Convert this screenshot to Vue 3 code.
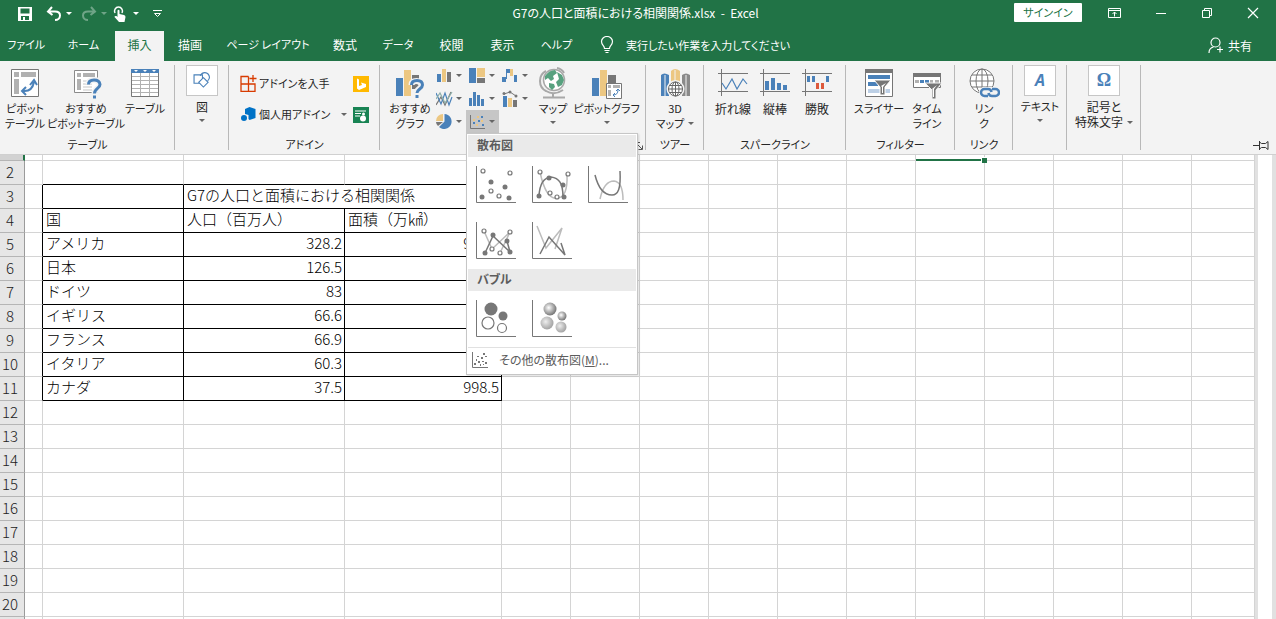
<script setup>
const tabs = ['ファイル', 'ホーム', '挿入', '描画', 'ページ レイアウト', '数式', 'データ', '校閲', '表示', 'ヘルプ']
const kanaOnly = (t) => /^[ァ-ー ]+$/.test(t)
const countries = [
  ['アメリカ', '328.2', '983.4'],
  ['日本', '126.5', ''],
  ['ドイツ', '83', ''],
  ['イギリス', '66.6', ''],
  ['フランス', '66.9', ''],
  ['イタリア', '60.3', ''],
  ['カナダ', '37.5', '998.5']
]
const emptyRows = ['12', '13', '14', '15', '16', '17', '18', '19', '20', '']
</script>

<template>
  <div class="app">
    <header class="titlebar">
      <div class="quick">
        <button class="qbtn" aria-label="上書き保存">
          <svg width="16" height="16" viewBox="0 0 16 16"><path d="M1 1h14v14H1z" fill="#fff" /><path d="M3.500 2.500h9v5h-9zM4 10h8v4H4z" fill="#217346" /><path d="M6 11h2v3H6z" fill="#fff" /></svg>
        </button>
        <button class="qbtn wide" aria-label="元に戻す">
          <svg width="16" height="16" viewBox="0 0 16 16" fill="none" stroke="#fff" stroke-width="2"><path d="M6 1 2 5.500l4.500 3.500M2 5.500h7c3 0 5 1.500 5 4s-2 4.500-5 4.500" /></svg>
          <i class="caret"></i>
        </button>
        <button class="qbtn wide dim" aria-label="やり直し">
          <svg width="16" height="16" viewBox="0 0 16 16" fill="none" stroke="#fff" stroke-width="2"><path d="m10 1 4 4.500L9.500 9M14 5.500H7c-3 0-5 1.500-5 4S4 14 7 14" /></svg>
          <i class="caret"></i>
        </button>
        <button class="qbtn wide touch" aria-label="タッチ/マウス モードの切り替え">
          <svg width="14" height="16" viewBox="0 0 14 16"><path d="M2 7a4 4 0 1 1 7 0" fill="none" stroke="#fff" stroke-width="1.500" /><path d="M4.500 4.500q1-1.500 2 0V8l4.500 1q1.500.5 1.500 2l-1 5H6L1.500 11q0-1.500 2-1l1 1z" fill="#fff" /></svg>
          <i class="caret"></i>
        </button>
        <button class="qbtn last" aria-label="クイック アクセス ツール バーのユーザー設定">
          <svg width="9" height="8" viewBox="0 0 9 8" fill="none" stroke="#fff"><path d="M0 .5h9M1.500 3.500l3 3 3-3z" /></svg>
        </button>
      </div>
      <div class="doc">G7の人口と面積における相関関係.xlsx &nbsp;- &nbsp;Excel</div>
      <div class="window">
        <button class="signin">サインイン</button>
        <button class="wbtn" aria-label="リボンの表示オプション"><svg width="14" height="12" viewBox="0 0 14 12" fill="none" stroke="#fff"><path d="M.5 1.500h12v9H.5zM.5 3.500h12M6.500 9.500V5M4.500 7l2-2 2 2" /></svg></button>
        <button class="wbtn" aria-label="最小化"><svg width="12" height="12" viewBox="0 0 12 12" stroke="#fff"><path d="M1 6.500h10" /></svg></button>
        <button class="wbtn" aria-label="元に戻す(縮小)"><svg width="12" height="12" viewBox="0 0 12 12" fill="none" stroke="#fff"><path d="M1.500 3.500h7v7h-7zM3.500 3.500v-2h7v7h-2" /></svg></button>
        <button class="wbtn" aria-label="閉じる"><svg width="12" height="12" viewBox="0 0 12 12" stroke="#fff" stroke-width="1.200"><path d="m1 1 10 10M11 1 1 11" /></svg></button>
      </div>
    </header>

    <nav class="tabs">
      <button v-for="t in tabs" :key="t" class="tab" :class="{ active: t === '挿入', kana: kanaOnly(t) }">{{ t }}</button>
      <button class="tell kana">
        <svg width="14" height="18" viewBox="0 0 14 18" fill="none" stroke="#fff" stroke-width="1.200"><path d="M4.500 12.500c0-3-3-3.500-3-7a5.500 5 0 0 1 11 0c0 3.500-3 4-3 7zM4.500 14.500h5M5.500 16.500h3" /></svg>
        実行したい作業を入力してください
      </button>
      <button class="share">
        <svg width="16" height="17" viewBox="0 0 16 17" fill="none" stroke="#fff" stroke-width="1.200"><circle cx="7.500" cy="5.500" r="4.500" /><path d="M1 16c0-3.500 2-5.500 4.500-6M12 9.500v6M9 12.500h6" /></svg>
        共有
      </button>
    </nav>

    <section class="ribbon">
      <div class="group">
        <div class="items g-table">
          <button class="big">
            <svg width="32" height="32" viewBox="0 0 32 32"><path d="M2.500 2.500h27v27h-27z" fill="#fff" stroke="#767676" /><path d="M5 5h5v5H5zM12 5h15v5H12zM5 12h5v15H5z" fill="#b1b1b1" /><path d="M14 24q9 1 11-9m-4 3 4-5 3 5M17 20l-4 4 4 4" fill="none" stroke="#4a81b9" stroke-width="2" /></svg>
            <span>ピボット<br>テーブル</span>
          </button>
          <button class="big">
            <svg width="32" height="32" viewBox="0 0 32 32"><path d="M4.500 3.500h23v22h-23z" fill="#fff" stroke="#8a8a8a" /><path d="M7 6h4v4H7zM13 6h12v4H13zM7 12h4v11H7z" fill="#b1b1b1" /><path d="M13 14h9M13 17h9M13 20h9M13 23h9" stroke="#c5c5c5" /><path d="M18.500 17q0-4 5.500-4t6 4.500c0 4-5.500 4-5.500 9m0 2v3" fill="none" stroke="#f3f3f3" stroke-width="6" /><path d="M18.500 17.500q0-4.500 5.500-4.500t6 4.500c0 4-5.500 4-5.500 9m0 2v3" fill="none" stroke="#4a81b9" stroke-width="3" /></svg>
            <span>おすすめ<br>ピボットテーブル</span>
          </button>
          <button class="big">
            <svg width="32" height="32" viewBox="0 0 32 32"><path d="M2.500 2.500h27v27h-27z" fill="#fff" stroke="#777" /><path d="M2 2h28v4H2z" fill="#4a81b9" /><path d="M5 3h4L7 5zM14 3h4l-2 2zM23 3h4l-2 2z" fill="#fff" /><path d="M11.500 6v23M20.500 6v23M3 9.500h26M3 13.500h26M3 17.500h26M3 21.500h26M3 25.500h26" stroke="#b1b1b1" /></svg>
            <span>テーブル</span>
          </button>
        </div>
        <div class="gname">テーブル</div>
      </div>

      <div class="group">
        <button class="boxed kanji">
          <svg width="32" height="31" viewBox="0 0 32 31" fill="#fff" stroke="#4a81b9" stroke-width="1.200"><path d="M7.500 9.500h9v9h-9z" /><path d="M14 10.500q3-5 8-2.500 4 4 0 8" fill="none" /><path d="m17.500 12.500 5 5-5 5-5-5z" /></svg>
          <span>図</span><i class="caret"></i>
        </button>
      </div>

      <div class="group">
        <div class="items addins">
          <button class="row">
            <svg width="17" height="17" viewBox="0 0 17 17" fill="none" stroke="#d83b01" stroke-width="1.300"><path d="M8.500 1.500H1v15h14V9H1M8.500 1.500V16M13 0v7M9.500 3.500h7" /></svg>アドインを入手
          </button>
          <button class="tile" aria-label="Bing Maps"><svg width="16" height="16" viewBox="0 0 16 16"><path d="M0 0h16v16H0z" fill="#ffb900" /><path d="m4 2.500 2 1V10l3-1-1-2.500L13 8v3l-7 3-2-1.500z" fill="#fff" /></svg></button>
          <button class="row">
            <svg width="17" height="17" viewBox="0 0 17 17" fill="#0072c6"><path d="m9.500 1 6 2v9l-6 2-1-1V9L5 8V3z" /><circle cx="4" cy="12" r="3" /></svg>個人用アドイン<i class="caret"></i>
          </button>
          <button class="tile" aria-label="People Graph"><svg width="16" height="16" viewBox="0 0 16 16"><path d="M0 0h16v16H0z" fill="#188353" /><path d="M2 4h11M2 6.500h6M2 9h5" stroke="#fff" /><circle cx="10.500" cy="7" r="1.500" fill="#fff" /><circle cx="10" cy="11.500" r="3" fill="#fff" /></svg></button>
        </div>
        <div class="gname">アドイン</div>
      </div>

      <div class="group">
        <div class="items g-chart">
          <button class="big first">
            <svg width="32" height="32" viewBox="0 0 32 32"><path d="M2 11h7v18H2z" fill="#4a81b9" /><path d="M10 3h7v26h-7z" fill="#ecc782" /><path d="M18 8h7v14h-7z" fill="#767676" /><path d="M17.500 18q0-4 5-4t5 4.500c0 3.500-5 3.500-5 8m0 2v3" fill="none" stroke="#f3f3f3" stroke-width="6" /><path d="M17.500 18q0-4.500 5.500-4.500t5.500 4.500c0 4-5.500 4-5.500 8m0 2v3" fill="none" stroke="#4a81b9" stroke-width="3" /></svg>
            <span>おすすめ<br>グラフ</span>
          </button>
          <div class="minis">
            <button class="mini" aria-label="縦棒グラフ"><svg width="17" height="17" viewBox="0 0 17 17"><path d="M1 7h4v8H1z" fill="#4a81b9" /><path d="M6 2h4v13H6z" fill="#ecc782" /><path d="M11 5h4v10h-4z" fill="#767676" /></svg><i class="caret"></i></button>
            <button class="mini" aria-label="階層構造グラフ"><svg width="17" height="17" viewBox="0 0 17 17"><path d="M0 1h7v15H0z" fill="#4a81b9" /><path d="M8 1h8v9H8z" fill="#ecc782" /><path d="M8 11h8v5H8z" fill="#767676" /></svg><i class="caret"></i></button>
            <button class="mini" aria-label="ウォーターフォール図"><svg width="17" height="17" viewBox="0 0 17 17"><path d="M0 10h4v5H0zM4 2h4v4H5v6H4z" fill="#4a81b9" /><path d="M8 2h3v7H8z" fill="#ecc782" /><path d="M12 8h3v7h-3z" fill="#4a81b9" /></svg><i class="caret"></i></button>
            <button class="mini" aria-label="折れ線グラフ"><svg width="17" height="17" viewBox="0 0 17 17" fill="none" stroke-width="1.200"><path d="m0 15 5-8 4 8 6-13" stroke="#767676" /><path d="m0 3 5 11 4-11 4 12 3-8" stroke="#4a81b9" /><path d="m0 9 4-6 5 10 7-11" stroke="#8dafaa" /></svg><i class="caret"></i></button>
            <button class="mini" aria-label="統計グラフ"><svg width="17" height="17" viewBox="0 0 17 17" fill="#4a81b9"><path d="M0 8h3v8H0zM4 2h3v14H4zM8 5h3v11H8zM12 9h3v7h-3z" /></svg><i class="caret"></i></button>
            <button class="mini" aria-label="複合グラフ"><svg width="17" height="17" viewBox="0 0 17 17"><path d="M1 6h4v11H1z" fill="#4a81b9" /><path d="M6 8h4v9H6z" fill="#ecc782" /><path d="M11 10h4v7h-4z" fill="#767676" /><path d="M2 4 8 2l6 4" stroke="#767676" fill="none" /><circle cx="2" cy="3.500" r="1.500" fill="#767676" /><circle cx="8" cy="2" r="1.500" fill="#767676" /><circle cx="14" cy="6" r="1.500" fill="#767676" /></svg><i class="caret"></i></button>
            <button class="mini" aria-label="円グラフ"><svg width="17" height="17" viewBox="0 0 17 17"><path d="M8.500 1A7.500 7.500 0 1 1 3 14l5.500-5.500z" fill="#4a81b9" /><path d="M7 1v7H0a7 7 0 0 1 7-7z" fill="#ecc782" /><path d="M0 9h7l-5 4q-2-2-2-4z" fill="#767676" /></svg><i class="caret"></i></button>
            <div class="anchor">
              <button class="mini open" aria-label="散布図" aria-expanded="true"><svg width="17" height="17" viewBox="0 0 17 17"><path d="M1.500 2v13.500H16" fill="none" stroke="#767676" /><path d="M8 3h2v2H8zM4 6h2v2H4zM12 7h2v2h-2zM7 11h2v2H7z" fill="#ecc782" /><path d="M4 9h2v2H4zM9 7h2v2H9zM12 3h2v2h-2zM13 11h2v2h-2z" fill="#4a81b9" /></svg><i class="caret"></i></button>
              <div class="menu">
                <h2>散布図</h2>
                <div class="gallery">
                  <button aria-label="散布図">
                    <svg width="44" height="44" viewBox="0 0 44 44"><path d="M4.500 4v36.500H44" class="axis" /><g class="ring"><circle cx="11" cy="9" r="2" /><circle cx="38" cy="11" r="2" /><circle cx="19" cy="29" r="2" /><circle cx="27" cy="34" r="2" /></g><g class="dot"><circle cx="19" cy="20" r="2.500" /><circle cx="33" cy="25" r="2.500" /><circle cx="10" cy="35" r="2.500" /><circle cx="37" cy="36" r="2.500" /></g></svg>
                  </button>
                  <button aria-label="散布図 (平滑線とマーカー)">
                    <svg width="44" height="44" viewBox="0 0 44 44"><path d="M4.500 4v36.500H44" class="axis" /><path d="M12 10q6 28 17 26 11 0 10-24" class="light" /><path d="M11 34q1-18 12-19c8 1 12 6 12 20" class="dark" /><g class="ring"><circle cx="12" cy="10" r="2" /><circle cx="40" cy="12" r="2" /><circle cx="22" cy="31" r="2" /><circle cx="29" cy="35" r="2" /></g><g class="dot"><circle cx="11" cy="34" r="2.500" /><circle cx="21" cy="16" r="2.500" /><circle cx="35" cy="23" r="2.500" /><circle cx="36" cy="35" r="2.500" /></g></svg>
                  </button>
                  <button aria-label="散布図 (平滑線)">
                    <svg width="44" height="44" viewBox="0 0 44 44"><path d="M4.500 4v36.500H44" class="axis" /><path d="M16 37q4-18 14-18 9 1 9 19" class="light" /><path d="M11 13q5 20 17 20c6 0 9-6 8-24" class="dark" /></svg>
                  </button>
                  <button aria-label="散布図 (直線とマーカー)">
                    <svg width="44" height="44" viewBox="0 0 44 44"><path d="M4.500 4v36.500H44" class="axis" /><path d="m12 13 8 18 18-17-10 21" class="light" /><path d="m13 35 8-17 17 16-3-11" class="dark" /><g class="ring"><circle cx="12" cy="13" r="2" /><circle cx="38" cy="14" r="2" /><circle cx="20" cy="31" r="2" /><circle cx="28" cy="35" r="2" /></g><g class="dot"><circle cx="13" cy="35" r="2.500" /><circle cx="21" cy="17" r="2.500" /><circle cx="35" cy="23" r="2.500" /><circle cx="38" cy="34" r="2.500" /></g></svg>
                  </button>
                  <button aria-label="散布図 (直線)">
                    <svg width="44" height="44" viewBox="0 0 44 44"><path d="M4.500 4v36.500H44" class="axis" /><path d="m9 8 9 22 16-20-7 21" class="light" /><path d="m12 36 9-17 16 18-4-12" class="dark" /></svg>
                  </button>
                </div>
                <h2>バブル</h2>
                <div class="gallery">
                  <button aria-label="バブル">
                    <svg width="44" height="44" viewBox="0 0 44 44"><path d="M4.500 4v36.500H44" class="axis" /><g class="dot"><circle cx="19" cy="13" r="6.500" /><circle cx="31" cy="20" r="4.500" /></g><g class="ring"><circle cx="16" cy="27" r="6" /><circle cx="30" cy="32" r="4.500" /></g></svg>
                  </button>
                  <button aria-label="3-D 効果付きバブル">
                    <svg width="44" height="44" viewBox="0 0 44 44"><defs><radialGradient id="ball" cx=".4" cy=".4" r=".6"><stop offset="0" stop-color="#fff" /><stop offset=".5" stop-color="#b9b9b9" /><stop offset="1" stop-color="#777" /></radialGradient><radialGradient id="pale" cx=".4" cy=".4" r=".7"><stop offset="0" stop-color="#eee" /><stop offset=".6" stop-color="#b9b9b9" /><stop offset="1" stop-color="#999" /></radialGradient></defs><path d="M4.500 4v36.500H44" class="axis" /><circle cx="22" cy="13" r="6.500" fill="url(#ball)" /><circle cx="34" cy="20" r="4.500" fill="url(#ball)" /><circle cx="19" cy="27" r="6.500" fill="url(#pale)" /><circle cx="33" cy="31" r="5.500" fill="url(#pale)" /></svg>
                  </button>
                </div>
                <button class="more">
                  <svg width="17" height="17" viewBox="0 0 17 17"><path d="M1.500 0v15.500H17" class="axis" /><path d="M3 11h2v2H3zM5 7h1v2H5zM7 9h2v2H7zM6 4h2v1H6zM10 5h2v2h-2zM12 1h2v2h-2zM14 4h2v1h-2zM11 9h2v1h-2zM14 10h2v2h-2zM9 12h1v2H9zM12 12h1v1h-1z" fill="#777" /></svg>
                  <span>その他の散布図(<u>M</u>)...</span>
                </button>
              </div>
            </div>
          </div>
          <button class="big">
            <svg width="32" height="32" viewBox="0 0 32 32"><path d="M9 4q-6 3-6 10t6 10q8 5 17-1M20 1q5 1 7 5M16 26v4M6 30.500h22" stroke="#a8a8a8" stroke-width="2" fill="none" /><circle cx="17" cy="13" r="10.500" fill="#fff" stroke="#a8a8a8" stroke-width="1.500" /><path d="M8 9q4-6 10-6l2 3-4 3 1 3-3 2-3-3-3 2zM20 5l5 3 2 5-2 5-4 2-2-5 3-3zM12 16l5 1 1 3-3 3-3-3z" fill="#57a17f" /></svg>
            <span>マップ</span><i class="caret"></i>
          </button>
          <button class="big">
            <svg width="32" height="32" viewBox="0 0 32 32"><path d="M1 11h7v18H1z" fill="#4a81b9" /><path d="M9 3h7v26H9z" fill="#ecc782" /><path d="M17 8h8v10h-8z" fill="#767676" /><path d="M15.500 16.500h15v15h-15z" fill="#fff" stroke="#767676" /><path d="M17 18h3v3h-3zM22 18h7v3h-7zM17 23h3v6h-3z" fill="#b1b1b1" /><path d="M22 28q5 0 5-5m-2 1 2-2 2 2M24 26l-2 2 2 2" fill="none" stroke="#4a81b9" /></svg>
            <span>ピボットグラフ</span><i class="caret"></i>
          </button>
        </div>
        <button class="launcher" aria-label="すべてのグラフを表示"><svg width="8" height="8" viewBox="0 0 8 8" fill="none" stroke="#555"><path d="M.5 3V.5H5M3 3l4 4M7.500 3.500v4h-4" /></svg></button>
      </div>

      <div class="group">
        <div class="items center">
          <button class="big">
            <svg width="32" height="32" viewBox="0 0 32 32"><path d="M2 8q3-3 8 0v21H2z" fill="#4a81b9" /><path d="M12 4q4-4 9 0v12h-9z" fill="#ecc782" /><path d="M23 8q4-3 8 0v21h-8z" fill="#8a8a8a" /><path d="M6 8v21M16 3v12M27 8v21" stroke="#f3f3f3" /><circle cx="16.500" cy="22" r="9" fill="#f3f3f3" /><g fill="#fff" stroke="#666"><circle cx="16.500" cy="22" r="7" /><ellipse cx="16.500" cy="22" rx="3.500" ry="7" /><path d="M9.500 22h14M11 18.500h11M11 25.500h11M16.500 15v14" /></g></svg>
            <span>3D<br>マップ<i class="caret inline"></i></span>
          </button>
        </div>
        <div class="gname">ツアー</div>
      </div>

      <div class="group">
        <div class="items center g-spark">
          <button class="big kanji">
            <svg width="32" height="32" viewBox="0 0 32 32" fill="none" stroke="#767676"><path d="M1 6.500h30M1 24.500h30M4.500 2v27" /><path d="m5 16 4 6 6-10 5 10 6-10 4 5" stroke="#4a81b9" stroke-width="1.200" /></svg>
            <span>折れ線</span>
          </button>
          <button class="big kanji">
            <svg width="32" height="32" viewBox="0 0 32 32" fill="none" stroke="#767676"><path d="M1 6.500h30M1 24.500h30M4.500 2v27" /><path d="M6 14h4v9H6zM12 11h4v12h-4zM18 16h4v7h-4zM24 18h4v5h-4z" fill="#4a81b9" stroke="none" /></svg>
            <span>縦棒</span>
          </button>
          <button class="big kanji">
            <svg width="32" height="32" viewBox="0 0 32 32" fill="none" stroke="#767676"><path d="M1 6.500h30M1 24.500h30M4.500 2v27" /><path d="M6 9h3v6H6zM11 9h3v6h-3zM25 9h3v6h-3z" fill="#4a81b9" stroke="none" /><path d="M15 16h3v6h-3zM20 16h3v6h-3z" fill="#dd5a3c" stroke="none" /></svg>
            <span>勝敗</span>
          </button>
        </div>
        <div class="gname">スパークライン</div>
      </div>

      <div class="group">
        <div class="items center g-filter">
          <button class="big">
            <svg width="32" height="32" viewBox="0 0 32 32"><path d="M2.500 2.500h27v27h-27z" fill="#fff" stroke="#767676" /><path d="M2 2h28v4H2z" fill="#767676" /><path d="M5 8h22v4H5zM5 15h10v4H5z" fill="#4a81b9" /><path d="M5 22h22v4H5z" fill="#bdd0e6" /><path d="M11 13h17l-6 7v8h-5v-8z" fill="#767676" stroke="#fff" /><path d="m18 19 1 1v6h1v-6l3-4z" fill="#fff" /></svg>
            <span>スライサー</span>
          </button>
          <button class="big">
            <svg width="32" height="32" viewBox="0 0 32 32"><path d="M2.500 6.500h27v14h-27z" fill="#fff" stroke="#767676" /><path d="M2 6h28v4H2z" fill="#767676" /><path d="M4 13h4v3H4zM19 13h3v3h-3zM24 13h4v3h-4z" fill="#b1b1b1" /><path d="M9 13h4v3H9zM14 13h4v3h-4z" fill="#4a81b9" /><path d="M14 16h17l-6 7v9h-4v-9z" fill="#767676" stroke="#f3f3f3" /><path d="m21 22 1 1v7h1v-8l3-4z" fill="#fff" /></svg>
            <span>タイム<br>ライン</span>
          </button>
        </div>
        <div class="gname">フィルター</div>
      </div>

      <div class="group">
        <div class="items center">
          <button class="big">
            <svg width="32" height="32" viewBox="0 0 32 32" fill="none" stroke="#767676"><circle cx="14" cy="14" r="12" fill="#fff" /><ellipse cx="14" cy="14" rx="6" ry="12" /><path d="M14 2v24M2 14h24M4 8h20M4 20h20" /><rect x="11" y="20" width="21" height="11" rx="5" fill="#f3f3f3" stroke="none" /><g stroke="#4a81b9" stroke-width="2.500"><path d="M20 29h-3.500a3.500 3.500 0 0 1 0-7H20q3 0 3.500 3M24 22h3.500a3.500 3.500 0 0 1 0 7H24q-3 0-3.500-3" /></g></svg>
            <span>リン<br>ク</span>
          </button>
        </div>
        <div class="gname">リンク</div>
      </div>

      <div class="group">
        <button class="boxed"><b class="face slanted">A</b><span>テキスト</span><i class="caret"></i></button>
      </div>
      <div class="group">
        <button class="boxed kanji"><b class="face">Ω</b><span>記号と<br>特殊文字<i class="caret inline"></i></span></button>
      </div>
      <button class="pin" aria-label="リボンの固定"><svg width="16" height="10" viewBox="0 0 16 10" fill="none" stroke="#333"><path d="M0 5.500h6M6.500 1v9M6.500 2l2 1.500h4l2.500-2v8l-2.500-2h-4l-2 1.500" /></svg></button>
    </section>

    <main class="sheet">
      <table>
        <colgroup><col class="c-head"><col class="c-a"><col class="c-b"><col class="c-c"><col class="c-d"><col v-for="n in 10" :key="n" class="c-n"><col></colgroup>
        <tbody>
          <tr class="cut"><th></th><td v-for="n in 15" :key="n" :class="{ selected: n === 11 }"><i v-if="n === 11" class="handle"></i></td></tr>
          <tr class="above"><th>2</th><td v-for="n in 15" :key="n"></td></tr>
          <tr><th>3</th><td class="edge"></td><td class="k"></td><td class="k" colspan="2">G7の人口と面積における相関関係</td><td v-for="n in 11" :key="n"></td></tr>
          <tr><th>4</th><td class="edge"></td><td class="k">国</td><td class="k">人口（百万人）</td><td class="k">面積（万㎢）</td><td v-for="n in 11" :key="n"></td></tr>
          <tr v-for="(c, i) in countries" :key="c[0]"><th>{{ i + 5 }}</th><td class="edge"></td><td class="k">{{ c[0] }}</td><td class="k num">{{ c[1] }}</td><td class="k num">{{ c[2] }}</td><td v-for="n in 11" :key="n"></td></tr>
          <tr v-for="r in emptyRows" :key="r"><th>{{ r }}</th><td v-for="n in 15" :key="n"></td></tr>
        </tbody>
      </table>
      <div class="scroll"></div>
    </main>
  </div>
</template>

<style>
body { overflow: hidden; }
</style>

<style scoped>
.app { height: 100vh; display: flex; flex-direction: column; overflow: hidden; background: #fff; color: #262626; font: 12px/15px "Noto Sans CJK JP", "Noto Sans", sans-serif; font-feature-settings: "palt"; }
* { box-sizing: border-box; }
button { border: 0; padding: 0; margin: 0; background: none; color: inherit; font: inherit; font-feature-settings: inherit; white-space: nowrap; }
svg { display: block; flex: none; }
.caret { flex: none; width: 0; height: 0; border: 3px solid transparent; border-top-color: #666; border-bottom: 0; }
.caret.inline { display: inline-block; margin: 0 0 3px 4px; }

.titlebar { flex: none; height: 31px; display: grid; grid-template-columns: 1fr auto 1fr; background: #217346; color: #fff; }
.quick { display: flex; align-items: center; height: 27px; padding-left: 17px; }
.qbtn { display: flex; align-items: center; gap: 4px; width: 29px; }
.qbtn.wide { width: 35px; }
.qbtn.wide.dim { width: 32px; opacity: .35; }
.qbtn.touch { gap: 6px; }
.qbtn.last { margin-left: 5px; }
.qbtn .caret { border-top-color: #fff; }
.doc { padding-right: 5px; line-height: 26px; }
.window { display: flex; justify-content: flex-end; height: 25px; align-items: center; }
.signin { width: 68px; height: 19px; margin-right: 10px; background: #fff; color: #217346; border-radius: 1px; font-size: 11px; }
.wbtn { width: 46px; height: 25px; display: flex; justify-content: center; align-items: center; }

.tabs { flex: none; height: 30px; display: grid; grid-template-columns: 52px 63px 49px 52px 104px 50px 56px 51px 51px 57px auto 1fr; background: #217346; color: #fff; }
.tab { padding-bottom: 3px; }
.tab.active { background: #f3f3f3; color: #217346; }
.kana { font-size: 11px; }
.tell, .share { display: flex; align-items: center; gap: 12px; padding-bottom: 2px; }
.tell { padding-left: 15px; }
.share { justify-self: end; gap: 4px; padding-right: 24px; }

.ribbon { flex: none; height: 94px; display: grid; grid-template-columns: 175px 54px 151px 266px 58px 142px 109px 58px 54px 74px 1fr; background: #f3f3f3; border-bottom: 1px solid #d0d0d0; font-size: 11px; }
.kanji { font-size: 12px; }
.group { position: relative; display: flex; flex-direction: column; align-items: center; padding-top: 3px; }
.group::after { content: ""; position: absolute; right: 0; top: 4px; bottom: 4px; width: 1px; background: #b8b8b8; }
.items { width: 100%; height: 73px; display: grid; align-content: start; justify-items: center; }
.items.center { justify-content: center; }
.gname { text-align: center; }
.big { display: flex; flex-direction: column; align-items: center; padding-top: 3px; text-align: center; }
.big > svg { margin-bottom: 2px; }
.big > .caret { margin-top: 5px; }
.g-table { grid-template-columns: 50px 72px 46px; }
.boxed { display: flex; flex-direction: column; align-items: center; margin-top: 1px; text-align: center; }
.boxed > svg, .face { width: 32px; height: 31px; margin-bottom: 3px; background: #fff; border: 1px solid #c6c6c6; }
.face { color: #4a81b9; font: bold 18px/28px "Liberation Serif", serif; }
.face.slanted { font: italic bold 16px/28px "Noto Sans", sans-serif; }
.boxed > .caret { margin-top: 5px; }

.addins { grid-template-columns: 113px 16px; justify-content: start; justify-items: start; grid-auto-rows: 31px; align-items: center; padding: 4px 0 0 11px; }
.row { display: flex; align-items: center; gap: 2px; width: 107px; }
.row .caret { margin-left: auto; }
.g-chart { grid-template-columns: 53px 99px 42px 65px; }
.g-chart .first { padding-left: 7px; }
.g-chart .minis { display: grid; grid-template-columns: repeat(3, 33px); grid-auto-rows: 23px; }
.mini { display: flex; align-items: center; gap: 3px; width: 33px; height: 23px; padding-left: 3px; }
.mini.open { background: #c6c6c6; }
.anchor { position: relative; }
.launcher { position: absolute; right: 3px; bottom: 4px; }
.g-spark { grid-template-columns: repeat(3, 42px); }
.items.g-filter { grid-template-columns: 48px 48px; padding-left: 5px; }
.pin { justify-self: end; align-self: end; padding: 0 7px 4px 0; }

.menu { position: absolute; z-index: 2; left: 0; top: 23px; width: 172px; padding: 1px; background: #fff; border: 1px solid #c6c6c6; box-shadow: 1px 1px 2px #0002; color: #5c5c5c; font-size: 12px; }
.menu h2 { margin: 0; height: 22px; padding-left: 9px; background: #eaeaea; font-size: 12px; line-height: 19px; }
.gallery { display: grid; grid-template-columns: repeat(3, 56px); grid-auto-rows: 56px; }
.gallery button { display: grid; place-items: start; padding: 5px 0 0 4px; }
.axis { fill: none; stroke: #777; }
.ring { fill: #fff; stroke: #777; stroke-width: 1.2; }
.dot { fill: #777; }
.light { fill: none; stroke: #bcbcbc; stroke-width: 1.5; }
.dark { fill: none; stroke: #777; stroke-width: 1.5; }
.more { display: flex; align-items: center; gap: 11px; width: 100%; height: 26px; padding-left: 3px; border-top: 1px solid #e1e1e1; }
.more span { padding-bottom: 2px; }

.sheet { flex: 1; min-height: 0; display: flex; align-items: flex-start; overflow: hidden; font-feature-settings: normal; }
table { flex: 1; width: 0; table-layout: fixed; border-collapse: separate; border-spacing: 0; font-size: 15px; line-height: 20px; font-weight: 300; color: #000; }
.c-head { width: 25px; } .c-a { width: 18px; } .c-b { width: 141px; } .c-c { width: 161px; } .c-d { width: 157px; } .c-n { width: 69px; }
th, td { height: 24px; padding: 0 2px 3px 3px; border-right: 1px solid #d4d4d4; border-bottom: 1px solid #d4d4d4; text-align: left; white-space: nowrap; }
th { padding: 0 4px 1px 0; text-align: center; font-weight: 300; background: #e6e6e6; border-color: #b5b5b5; border-right-color: #9b9b9b; color: #222; }
.k, .edge { border-right-color: #000; }
.k { border-bottom-color: #000; }
.above td:nth-child(n+3):nth-child(-n+5) { border-bottom-color: #000; }
.num { text-align: right; }
.cut th, .cut td { height: 6px; line-height: 0; padding: 0; }
.cut th { background: #d2d2d2; border-right: 2px solid #217346; }
.cut .selected { position: relative; border-bottom: 2px solid #217346; }
.handle { position: absolute; right: -3px; bottom: -4px; width: 6px; height: 6px; background: #217346; border: 1px solid #fff; border-width: 1px 0 0 1px; }
.scroll { align-self: stretch; flex: none; width: 21px; border: solid #e1e1e1; border-width: 0 4px 0 3px; }
</style>
